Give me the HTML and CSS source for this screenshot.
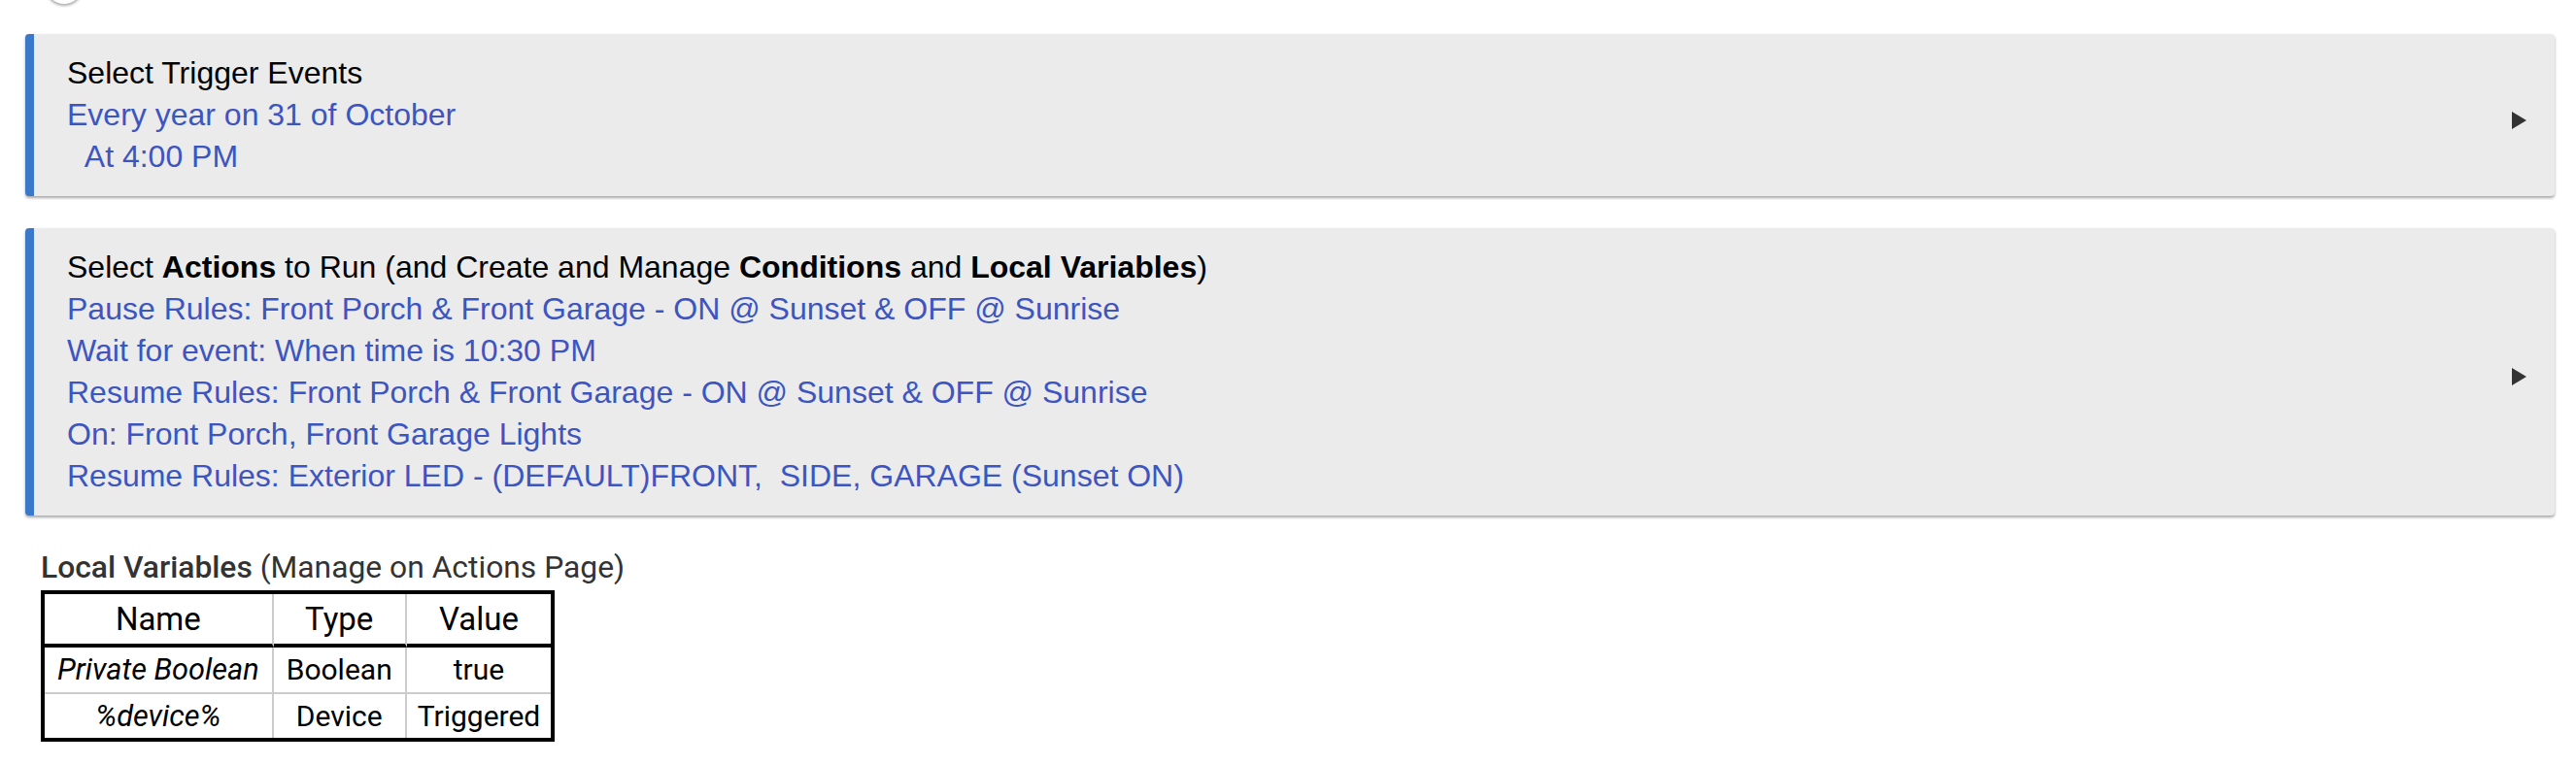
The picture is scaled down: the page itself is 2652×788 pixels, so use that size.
FILE: index.html
```html
<!DOCTYPE html>
<html lang="en">
<head>
<meta charset="utf-8">
<title>Rule</title>
<link rel="stylesheet" href="styles.css">
</head>
<body>
<div class="page">
  <div class="top-row"><span class="round-btn"></span></div>

  <div class="card card-first">
    <div class="card-body">
      <div class="card-title">Select Trigger Events</div>
      <div class="card-desc">Every year on 31 of October<br>&nbsp;&nbsp;At 4:00 PM</div>
    </div>
    <span class="caret"></span>
  </div>

  <div class="card">
    <div class="card-body">
      <div class="card-title">Select <b>Actions</b> to Run (and Create and Manage <b>Conditions</b> and <b>Local Variables</b>)</div>
      <div class="card-desc">Pause Rules: Front Porch &amp; Front Garage - ON @ Sunset &amp; OFF @ Sunrise<br>Wait for event: When time is 10:30 PM<br>Resume Rules: Front Porch &amp; Front Garage - ON @ Sunset &amp; OFF @ Sunrise<br>On: Front Porch, Front Garage Lights<br>Resume Rules: Exterior LED - (DEFAULT)FRONT,&nbsp; SIDE, GARAGE (Sunset ON)</div>
    </div>
    <span class="caret"></span>
  </div>

  <section class="vars">
    <div class="vars-title"><span class="vars-strong">Local Variables</span> (Manage on Actions Page)</div>
    <table class="vars-table">
      <thead>
        <tr><th>Name</th><th>Type</th><th>Value</th></tr>
      </thead>
      <tbody>
        <tr><td class="var-name">Private Boolean</td><td>Boolean</td><td>true</td></tr>
        <tr><td class="var-name">%device%</td><td>Device</td><td>Triggered</td></tr>
      </tbody>
    </table>
  </section>
</div>
</body>
</html>
```

FILE: styles.css
```css
html, body {
  margin: 0;
  padding: 0;
  background: #ffffff;
}

.page {
  padding: 0 22px 0 26px;
  font-family: "Liberation Sans", Arial, sans-serif;
}

.top-row {
  height: 3px;
  display: flex;
  padding-left: 21px;
}

.round-btn {
  display: block;
  width: 36px;
  height: 36px;
  margin-top: -33px;
  border-radius: 50%;
  background: #ffffff;
  border: 1px solid #bdbdbd;
  box-shadow: 0 1px 3px rgba(0, 0, 0, 0.35);
}

.card {
  display: flex;
  align-items: center;
  margin-top: 33px;
  background: #ebebeb;
  border-left: 9px solid #3b78c8;
  border-radius: 4px;
  padding: 19px 29px 19px 34px;
  box-shadow: 0 2px 3px rgba(0, 0, 0, 0.35);
}

.card-first {
  margin-top: 32px;
}

.card-body {
  flex: 1;
  font-size: 32px;
  line-height: 43px;
}

.card-title {
  color: #000000;
}

.card-title b {
  font-weight: 700;
}

.card-desc {
  color: #3c55c0;
}

.caret {
  width: 0;
  height: 0;
  margin-top: 10px;
  border-top: 9px solid transparent;
  border-bottom: 9px solid transparent;
  border-left: 15px solid #333333;
}

.vars {
  margin-top: 29px;
  padding-left: 16px;
  font-family: Roboto, "Liberation Sans", sans-serif;
}

.vars-title {
  font-size: 31.8px;
  line-height: 48px;
  color: #333333;
}

.vars-strong {
  font-weight: 500;
}

.vars-table {
  border-collapse: separate;
  border-spacing: 0;
  border: 4px solid #000000;
  color: #000000;
}

.vars-table th {
  font-weight: 400;
  font-size: 33px;
  line-height: 51px;
  padding: 0 13px;
  border-bottom: 4px solid #000000;
  border-right: 2px solid #cccccc;
}

.vars-table td {
  font-size: 30px;
  line-height: 46px;
  padding: 0 13px;
  text-align: center;
  border-right: 2px solid #cccccc;
}

.vars-table tbody tr:first-child td {
  border-bottom: 2px solid #cccccc;
}

.vars-table tbody tr:last-child td {
  line-height: 45px;
}

.vars-table th:last-child,
.vars-table td:last-child {
  border-right: none;
  padding: 0 11px;
}

.vars-table td.var-name {
  font-style: italic;
  font-size: 30.7px;
}
```
